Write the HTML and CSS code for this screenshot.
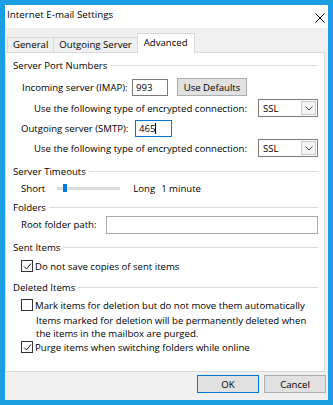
FILE: index.html
```html
<!DOCTYPE html>
<html>
<head>
<meta charset="utf-8">
<link rel="stylesheet" href="styles.css">
</head>
<body>
<div class="window">
  <div class="titlebar">
    <span class="title">Internet E-mail Settings</span>
    <svg class="close" width="10" height="10" viewBox="0 0 10 10"><path d="M0.5 0.5 L9.5 9.5 M9.5 0.5 L0.5 9.5" stroke="#000" stroke-width="1"/></svg>
  </div>
  <div class="tabs">
    <div class="tab">General</div>
    <div class="tab">Outgoing Server</div>
    <div class="tab active">Advanced</div>
  </div>
  <div class="panel">
    <div class="group-head h1"><span>Server Port Numbers</span><i></i></div>
    <div class="row r-in">
      <span class="lbl in-lbl">Incoming server (IMAP):</span>
      <span class="input port">993</span>
      <span class="btn defaults">Use Defaults</span>
    </div>
    <div class="row r-enc r-enc1">
      <span>Use the following type of encrypted connection:</span>
      <span class="select"><span>SSL</span><span class="arrow"><svg width="8" height="5" viewBox="0 0 8 5"><path d="M0.5 0.5 L4 4 L7.5 0.5" fill="none" stroke="#444" stroke-width="1"/></svg></span></span>
    </div>
    <div class="row r-out">
      <span class="lbl out-lbl">Outgoing server (SMTP):</span>
      <span class="input port focus">465<span class="caret"></span></span>
    </div>
    <div class="row r-enc">
      <span>Use the following type of encrypted connection:</span>
      <span class="select"><span>SSL</span><span class="arrow"><svg width="8" height="5" viewBox="0 0 8 5"><path d="M0.5 0.5 L4 4 L7.5 0.5" fill="none" stroke="#444" stroke-width="1"/></svg></span></span>
    </div>

    <div class="group-head h2"><span>Server Timeouts</span><i></i></div>
    <div class="row r-slider">
      <span class="lbl">Short</span>
      <span class="slider"><span class="track"></span><span class="thumb"></span></span>
      <span class="long">Long</span>
      <span>1 minute</span>
    </div>

    <div class="group-head h3"><span>Folders</span><i></i></div>
    <div class="row r-root">
      <span class="lbl">Root folder path:</span>
      <span class="input root"></span>
    </div>

    <div class="group-head h4"><span>Sent Items</span><i></i></div>
    <div class="row r-check cb1">
      <span class="cb checked"><svg width="9" height="9" viewBox="0 0 9 9"><path d="M1 4.5 L3.5 7 L8 1.5" fill="none" stroke="#222" stroke-width="1"/></svg></span>
      <span>Do not save copies of sent items</span>
    </div>

    <div class="group-head h5"><span>Deleted Items</span><i></i></div>
    <div class="row r-check cb2">
      <span class="cb"></span>
      <span>Mark items for deletion but do not move them automatically</span>
    </div>
    <div class="note">Items marked for deletion will be permanently deleted when<br>the items in the mailbox are purged.</div>
    <div class="row r-check cb3">
      <span class="cb checked"><svg width="9" height="9" viewBox="0 0 9 9"><path d="M1 4.5 L3.5 7 L8 1.5" fill="none" stroke="#222" stroke-width="1"/></svg></span>
      <span>Purge items when switching folders while online</span>
    </div>
  </div>
  <div class="footer">
    <span class="btn ok">OK</span>
    <span class="btn cancel">Cancel</span>
  </div>
</div>
</body>
</html>
```

FILE: styles.css
```css
* { box-sizing: border-box; }
body {
  margin: 0;
  background: #1a9fe3;
  font-family: "Open Sans", "Noto Sans", sans-serif;
  font-size: 9.6px;
  color: #000;
  width: 333px;
  height: 405px;
  overflow: hidden;
}
.window {
  margin: 5px;
  width: 323px;
  height: 395px;
  background: #f0f0f0;
  display: flex;
  flex-direction: column;
}
.titlebar {
  height: 23px;
  background: #fff;
  display: flex;
  justify-content: space-between;
  align-items: flex-start;
  padding: 3px 3px 0 2px;
  font-size: 9.8px;
}
.close { margin-top: 5px; }
.tabs {
  height: 24px;
  display: flex;
  align-items: flex-end;
  padding-left: 2px;
  position: relative;
  z-index: 1;
}
.tab {
  height: 15px;
  line-height: 13px;
  border: 1px solid #d9d9d9;
  border-bottom: none;
  border-right: none;
  padding: 0 5px;
  background: #f0f0f0;
}
.tab.active {
  height: 20px;
  line-height: 17px;
  background: #fff;
  border-right: 1px solid #d9d9d9;
  margin-bottom: -1px;
  padding: 0 6px;
}
.panel {
  height: 320px;
  background: #fff;
  border: 1px solid #d9d9d9;
  margin-right: 3px;
  padding: 0 6px 0 7px;
  display: flex;
  flex-direction: column;
}
.group-head {
  display: flex;
  align-items: center;
  height: 14px;
  flex: none;
}
.h1 { margin-top: 5px; }
.h2 { margin-top: 6px; }
.h3 { margin-top: 4px; }
.h4 { margin-top: 6px; }
.h5 { margin-top: 6px; }
.group-head i {
  flex: 1;
  border-top: 1px solid #dcdcdc;
  margin-left: 3px;
  margin-top: 1px;
}
.row {
  display: flex;
  align-items: center;
  height: 20px;
  flex: none;
}
.r-in { margin-top: 5px; padding-left: 9px; }
.r-enc1 { margin-top: 1px; }
.r-out { padding-left: 8px; }
.r-enc { padding-left: 21px; justify-content: space-between; }
.in-lbl { width: 110px; }
.out-lbl { width: 114px; }
.input {
  display: inline-flex;
  align-items: center;
  height: 17px;
  background: #fff;
  border: 1px solid #7a7a7a;
  padding-left: 3px;
}
.port { width: 36px; }
.focus { border-color: #0078d7; width: 37px; }
.caret { display: inline-block; width: 1px; height: 11px; background: #000; }
.btn {
  display: inline-flex;
  align-items: center;
  justify-content: center;
  height: 18px;
  background: #e1e1e1;
  border: 1px solid #adadad;
}
.defaults { width: 70px; margin-left: 9px; }
.select {
  display: inline-flex;
  align-items: center;
  justify-content: space-between;
  width: 60px;
  height: 18px;
  border: 1px solid #7a7a7a;
  background: #fff;
  padding: 0 1px 0 4px;
}
.arrow {
  display: inline-flex;
  align-items: center;
  justify-content: center;
  width: 15px;
  height: 14px;
  border: 1px solid #c8c8c8;
  background: #f3f3f3;
}
.r-slider { margin-top: 2px; padding-left: 8px; height: 16px; }
.slider {
  position: relative;
  width: 63px;
  height: 12px;
  margin-left: 12px;
  display: inline-flex;
  align-items: center;
}
.track {
  width: 100%;
  height: 3px;
  background: #e7e7e7;
  border: 1px solid #d6d6d6;
}
.thumb {
  position: absolute;
  left: 6px;
  top: 2px;
  width: 4px;
  height: 8px;
  background: #007ad9;
}
.long { margin-left: 13px; margin-right: 6px; }
.r-root { margin-top: 1px; padding-left: 8px; height: 19px; }
.root { width: 212px; margin-left: 9px; border-color: #ababab; height: 18px; }
.r-check { padding-left: 8px; height: 16px; }
.cb1 { margin-top: 4px; }
.cb2 { margin-top: 3px; }
.cb3 { margin-top: -1px; }
.cb {
  display: inline-flex;
  align-items: center;
  justify-content: center;
  width: 12px;
  height: 12px;
  border: 1px solid #333;
  background: #fff;
  margin-right: 2px;
}
.note {
  padding-left: 23px;
  line-height: 12.5px;
  height: 25px;
  margin-top: 2px;
  flex: none;
}
.footer {
  flex: 1;
  display: flex;
  justify-content: flex-end;
  align-items: flex-start;
  padding: 3px 2px 0 0;
  gap: 5px;
}
.ok, .cancel { width: 62px; height: 18px; }
.ok { border-color: #0078d7; }
```
